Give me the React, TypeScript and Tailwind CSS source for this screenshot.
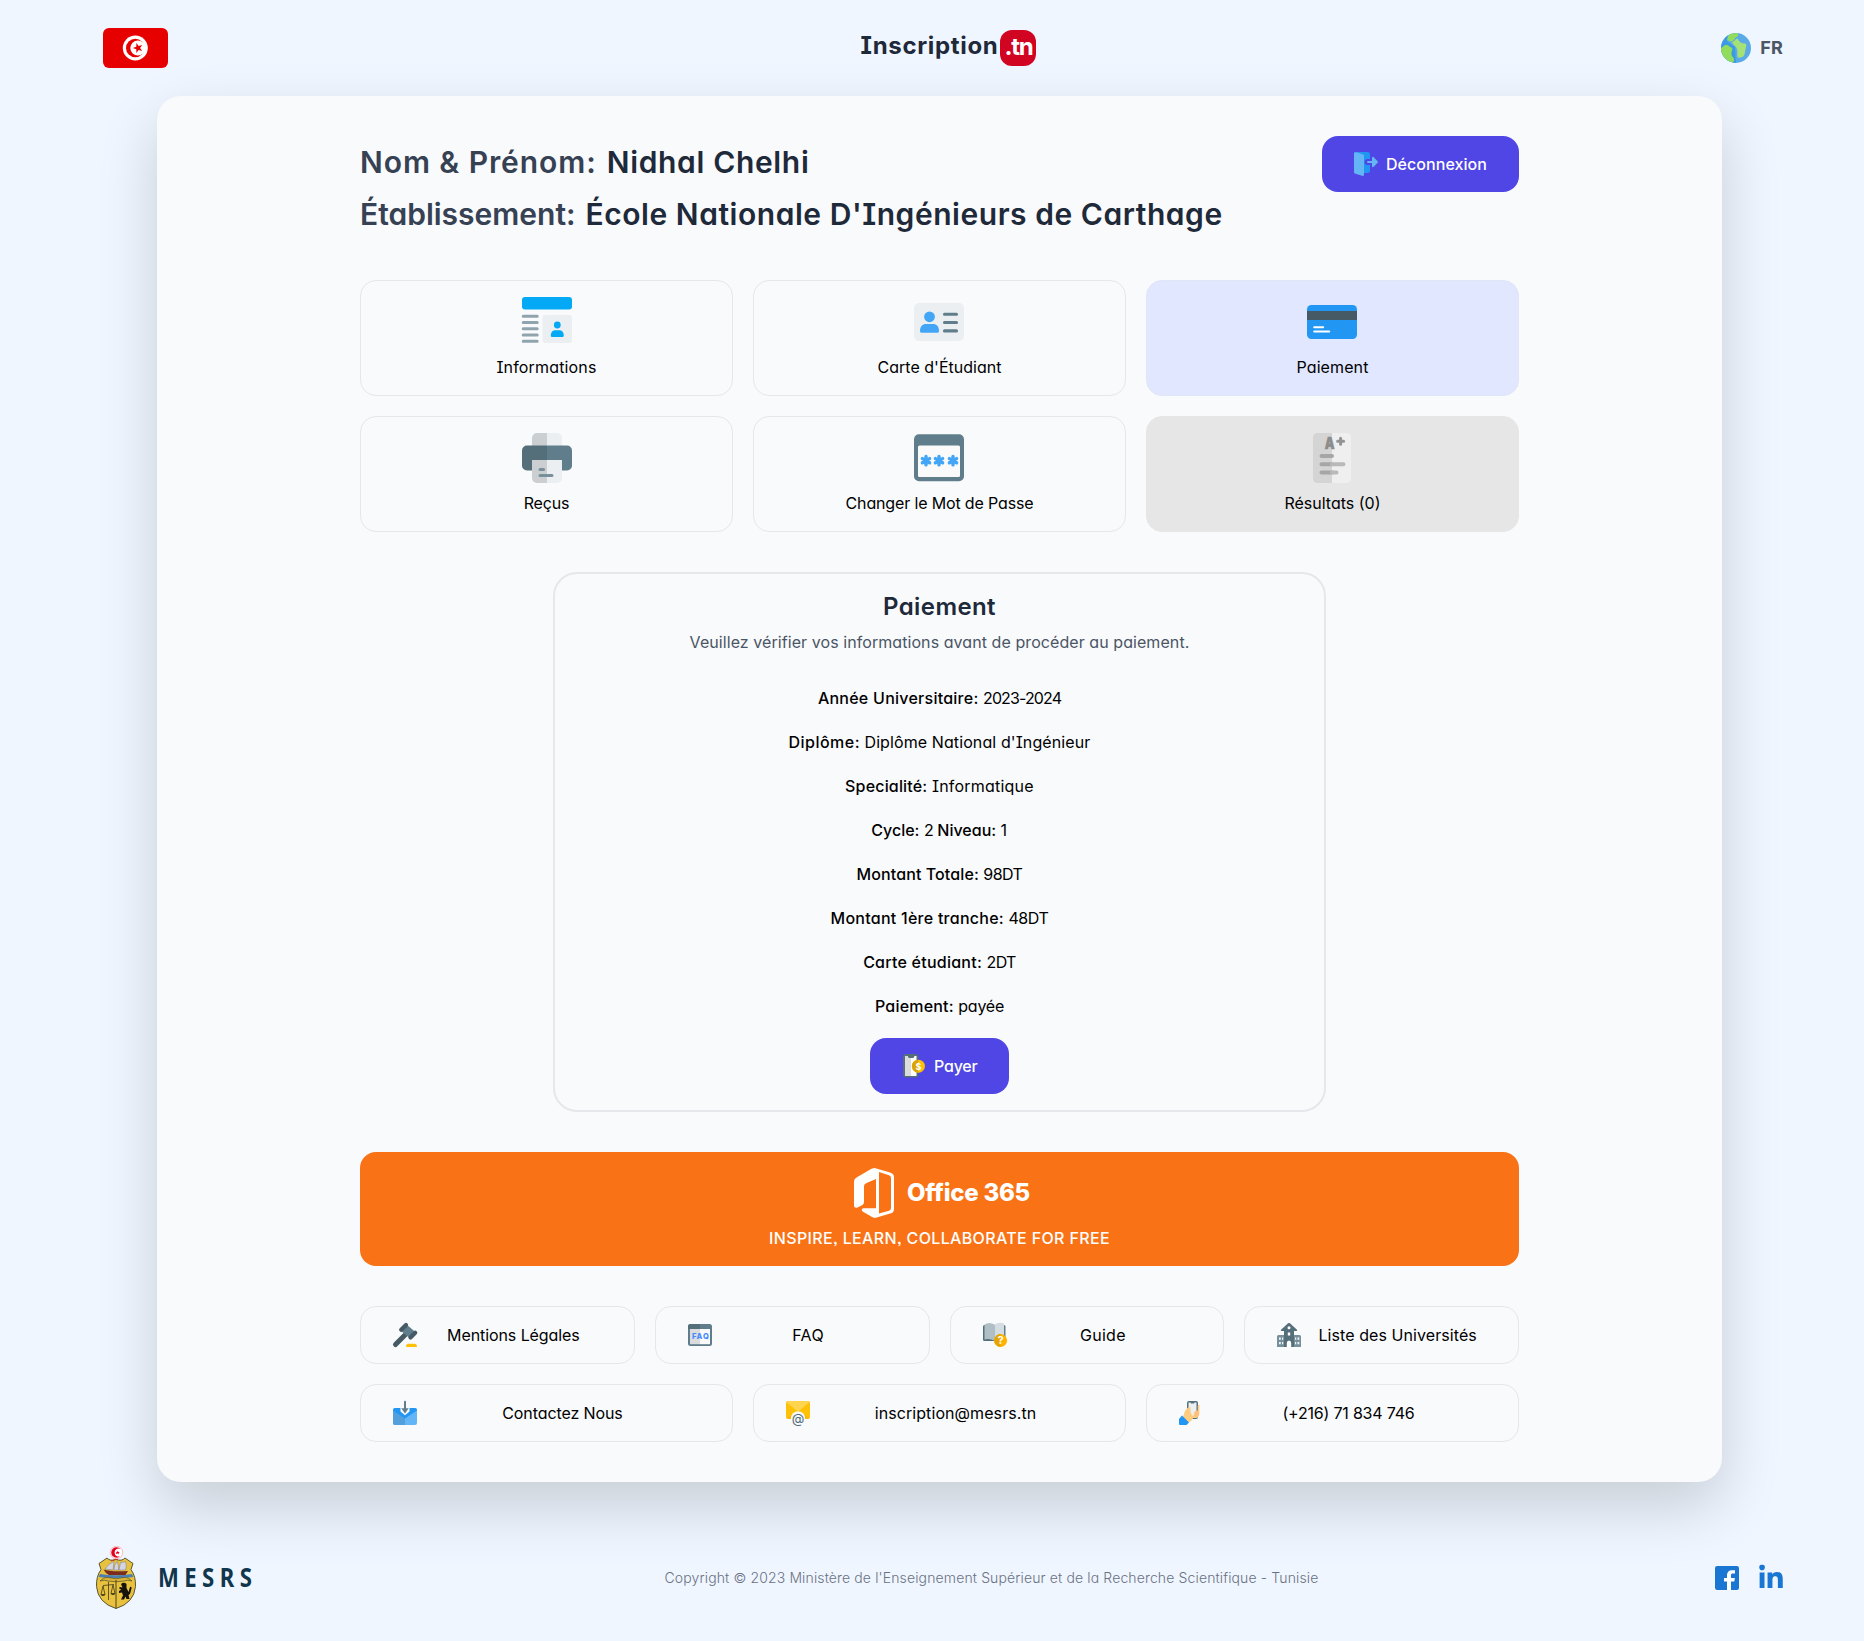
import type { ReactNode } from "react";
import { FaLinkedinIn } from "react-icons/fa";

const icon50 = "size-[50px] shrink-0 overflow-visible";
const icon50Nudged = "mr-px size-[50px] shrink-0 overflow-visible";
const icon24 = "size-6 shrink-0 overflow-visible";

function FlagIcon() {
  return (
    <svg viewBox="0 0 65 40" className="w-[65px] h-10">
      <rect width="65" height="40" rx="6" fill="#e70000" />
      <circle cx="32.3" cy="20" r="12.5" fill="#fff" />
      <circle cx="32.3" cy="20" r="9.3" fill="#e70000" />
      <circle cx="34.9" cy="20" r="7.6" fill="#fff" />
      <path d="M29.8 20l3.5-1.2.1-3.7 2.3 2.9 3.5-1-2.1 3.1 2.1 3-3.6-1-2.2 2.9-.1-3.7z" fill="#e70000" />
    </svg>
  );
}

function GlobeIcon() {
  return (
    <svg viewBox="0 0 30 30" className="size-[30px]">
      <defs>
        <clipPath id="globe"><circle cx="15" cy="15" r="15" /></clipPath>
      </defs>
      <g clipPath="url(#globe)">
        <rect width="30" height="30" fill="#5aaae7" />
        <path d="M0 0h7L6 8l8 6 1 16H0z" fill="#3d9ae2" />
        <path d="M8 1L17 0v3l-3 2c-1 2-2 3.500-4 3.500-1.500 0-2-1-4-1.500z" fill="#91dc5a" />
        <path d="M0 15c2-.5 2.500-3 5.500-3 2.500 0 2.500 2 5 2.500 2 1.500-.5 4 0 7 .5 2.500 3 3.500 2.500 5.500L12 30H0z" fill="#91dc5a" />
        <path d="M11 9c3-.5 3.500-3.500 5.500-3.500C18 9 21 11 24.500 10.500c1.500 1 .5 4 0 6-.5 3-1 7-3.500 7.500-2 .8-4 1-4.500 0-.6-2 .5-5-.5-8-1-3-4-4-5-7z" fill="#a4e276" />
      </g>
    </svg>
  );
}

function DoorIcon() {
  return (
    <svg viewBox="0 0 24 24" className={icon24}>
      <path d="M1.500 0H13.500a2.500 2.500 0 0 1 2.500 2.500V7h-2.500a3 3 0 0 0 0 6H16v5.500a2.500 2.500 0 0 1-2.500 2.500H9z" fill="#2196f3" />
      <path d="M0 1.500C0 .3 1 0 2 .3l6.500 2C9.500 2.600 10 3.200 10 4.200v18.200c0 1.200-.8 1.800-2 1.400l-6.500-2C.5 21.500 0 21 0 20z" fill="#64b5f6" />
      <path d="M14 9h4V5.800c0-1 1-1.300 1.700-.6l3.900 4c.5.500.5 1.100 0 1.600l-3.900 4c-.7.700-1.700.4-1.700-.6V11h-4a1 1 0 0 1 0-2z" fill="#64b5f6" />
    </svg>
  );
}

function InfoIcon() {
  return (
    <svg viewBox="0 0 50 50" className={icon50}>
      <rect width="50" height="12.500" rx="3" fill="#03a9f4" />
      <path d="M1.200 19.200h14M1.200 25.400h14M1.200 31.700h14M1.200 38h14M1.200 44.200h14" stroke="#90a4ae" strokeWidth="3" strokeLinecap="round" />
      <rect x="20.500" y="18" width="29.500" height="28" rx="2.500" fill="#eceff1" />
      <circle cx="35.300" cy="28" r="3.400" fill="#03a9f4" />
      <path d="M28.800 38.500c0-3.500 2-5.300 4.500-5.300h4c2.500 0 4.500 1.800 4.500 5.300 0 .9-.5 1.500-1.400 1.500H30.200c-.9 0-1.400-.6-1.400-1.500z" fill="#03a9f4" />
    </svg>
  );
}

function IdCardIcon() {
  return (
    <svg viewBox="0 0 50 50" className={icon50Nudged}>
      <rect y="6" width="50" height="38" rx="5" fill="#eceff1" />
      <circle cx="15.500" cy="19.800" r="5.400" fill="#42a5f5" />
      <path d="M6 34c0-4.500 2.500-7 6-7h7c3.500 0 6 2.500 6 7 0 1.200-.6 1.800-1.800 1.800H7.800C6.600 35.800 6 35.200 6 34z" fill="#42a5f5" />
      <path d="M30.500 17.200h12M30.500 25.500h12M30.500 33.900h12" stroke="#607d8b" strokeWidth="3.100" strokeLinecap="round" />
    </svg>
  );
}

function CreditCardIcon() {
  return (
    <svg viewBox="0 0 50 50" className={icon50Nudged}>
      <rect y="8" width="50" height="34" rx="4.500" fill="#2196f3" />
      <rect y="14" width="50" height="9" fill="#455a64" />
      <path d="M7.200 30.300h9M7.200 34.400h15" stroke="#fff" strokeWidth="2" strokeLinecap="round" />
    </svg>
  );
}

function PrinterIcon() {
  return (
    <svg viewBox="0 0 50 50" className={icon50}>
      <path d="M25 0h10a5 5 0 0 1 5 5v9H25z" fill="#eceff1" />
      <path d="M25 0H15a5 5 0 0 0-5 5v9h15z" fill="#cbcfd2" />
      <path d="M25 12.500h20a5 5 0 0 1 5 5v15a5 5 0 0 1-5 5H25z" fill="#607d8b" />
      <path d="M25 12.500H5a5 5 0 0 0-5 5v15a5 5 0 0 0 5 5h20z" fill="#546e7a" />
      <path d="M25 27h15v18a5 5 0 0 1-5 5H25z" fill="#eceff1" />
      <path d="M25 27H10v18a5 5 0 0 0 5 5h10z" fill="#cbcfd2" />
      <path d="M18 36.400h3.600M18 42.500h12" stroke="#78909c" strokeWidth="3" strokeLinecap="round" />
    </svg>
  );
}

function PasswordIcon() {
  return (
    <svg viewBox="0 0 50 50" className={icon50Nudged}>
      <rect y="1.200" width="50" height="47" rx="5" fill="#607d8b" />
      <rect x="4" y="12.500" width="42" height="31.500" rx="1.500" fill="#fafafa" />
      <path
        d="M12 23.500v8.400M8.400 25.600l7.200 4.200M15.600 25.600l-7.200 4.200M25 23.500v8.400M21.400 25.600l7.200 4.200M28.600 25.600l-7.200 4.200M39 23.500v8.400M35.400 25.600l7.200 4.200M42.600 25.600l-7.200 4.200"
        stroke="#42a5f5"
        strokeWidth="3.400"
        strokeLinecap="round"
      />
    </svg>
  );
}

function ResultsIcon() {
  return (
    <svg viewBox="0 0 50 50" className={icon50Nudged}>
      <path d="M25 0h14.500a4.500 4.500 0 0 1 4.500 4.500v41a4.500 4.500 0 0 1-4.500 4.500H25z" fill="#efefef" />
      <path d="M25 0H10.500A4.500 4.500 0 0 0 6 4.500v41a4.500 4.500 0 0 0 4.500 4.500H25z" fill="#d4d4d4" />
      <text x="17.800" y="16.300" fontFamily="Inter" fontWeight="900" fontSize="16.500" textLength="9.800" lengthAdjust="spacingAndGlyphs" fill="#8c8c8c" stroke="#8c8c8c" strokeWidth=".7" strokeLinejoin="round">A</text>
      <path d="M33.600 5.300v6M30.600 8.300h6" stroke="#939393" strokeWidth="3" strokeLinecap="round" />
      <path d="M14.500 22.900H25M14.500 31.200H25M14.500 39.500H25" stroke="#a6a6a6" strokeWidth="4" strokeLinecap="round" />
      <path d="M25 31.200h11.500M25 39.500h4.500" stroke="#b9b9b9" strokeWidth="4" strokeLinecap="round" />
    </svg>
  );
}

function PhonePayIcon() {
  return (
    <svg viewBox="0 0 24 24" className={icon24}>
      <rect x="1" width="15.500" height="23.500" rx="3" fill="#546e7a" />
      <path d="M3 2h2.500l1 2h5l1-2H14.500v20H3z" fill="#fff" />
      <path d="M3 2h2.500l1 2H9v18H3z" fill="#dcdcdc" />
      <circle cx="16.400" cy="12.200" r="6.500" fill="#ffc107" />
      <path d="M16.400 5.700a6.500 6.500 0 0 0 0 13z" fill="#d9a406" />
      <text x="16.400" y="15.600" textAnchor="middle" fontFamily="Inter" fontWeight="700" fontSize="9" fill="#fff">$</text>
    </svg>
  );
}

function OfficeIcon() {
  return (
    <svg viewBox="0 0 50 50" className={icon50}>
      <path
        transform="translate(5 0)"
        fill="#fff"
        fillRule="evenodd"
        d="M20.500 0L36 4.500Q40 5.700 40 9V41Q40 44.300 37 45.300L21 50L18.500 49.300L9 43.800Q7 42.500 8 41Q8.500 40.200 10 40.200H22V11L12.500 15Q10 16 10 18V34Q10 36 8.500 37L3 39.700Q0 40 0 38V13.500Q0 11 2.500 9.500L17.500.8ZM25 4V45.500L35 42.700Q37 42 37 40V10Q37 8 35 7.300Z"
      />
    </svg>
  );
}

function GavelIcon() {
  return (
    <svg viewBox="0 0 24 24" className={icon24}>
      <path d="M2.500 21.500L12 12" stroke="#455a64" strokeWidth="5" strokeLinecap="round" />
      <path d="M7 7l6-6 10.500 9L17 15.500z" fill="#607d8b" />
      <path d="M8.200 6.800L13 2M17.500 14.500l4.700-4.700" stroke="#455a64" strokeWidth="4.200" strokeLinecap="round" />
      <path d="M13 24c0-2 1-3.200 2.500-3.200h6c1.500 0 2.500 1.200 2.500 3.200z" fill="#ffc107" />
    </svg>
  );
}

function FaqIcon() {
  return (
    <svg viewBox="0 0 24 24" className={icon24}>
      <rect y="1" width="24" height="22" rx="2.500" fill="#607d8b" />
      <path d="M2.500 1H12v5H0V3.500A2.500 2.500 0 0 1 2.500 1z" fill="#546e7a" />
      <rect x="2" y="6" width="10" height="15.200" fill="#dadcde" />
      <rect x="12" y="6" width="10" height="15.200" fill="#fafafa" />
      <text x="4" y="16.400" textLength="16.800" fontFamily="Inter" fontWeight="800" fontSize="7.500" fill="#448aff">FAQ</text>
    </svg>
  );
}

function GuideIcon() {
  return (
    <svg viewBox="0 0 24 24" className={icon24}>
      <path d="M0 3.500Q0 2 1.500 2H11v16H1.500Q0 18 0 16.500z" fill="#546e7a" />
      <path d="M11 2h10q1.500 0 1.500 1.500v13q0 1.500-1.500 1.500H11z" fill="#607d8b" />
      <path d="M1.500 1.500Q6-1.500 11.500 1.500v16Q6 15 1.500 16.500z" fill="#b0bec5" />
      <path d="M11.500 1.500Q16-1.500 21 .5v15.500q-5-1-9.500 1.500z" fill="#d4dde1" />
      <circle cx="17.600" cy="17.500" r="6.500" fill="#ffb300" />
      <path d="M17.600 11a6.500 6.500 0 0 0 0 13z" fill="#e6a400" />
      <text x="17.600" y="21.400" textAnchor="middle" fontFamily="Inter" fontWeight="700" fontSize="11" fill="#fff">?</text>
    </svg>
  );
}

function UniversityIcon() {
  return (
    <svg viewBox="0 0 24 24" className={icon24}>
      <path d="M0 13.500Q0 12 1.500 12H7v12H0zM17 12h5.500Q24 12 24 13.500V24h-7z" fill="#78909c" />
      <path d="M12 0q1 0 2 1.200l6 5.500q.8 1.300-.8 1.300H17v16H7V8H4.800Q3.200 8 4 6.700l6-5.500Q11 0 12 0z" fill="#546e7a" />
      <circle cx="12" cy="4.800" r="1.500" fill="#fff" />
      <path d="M10.800 9.500h2.400v3h-2.400zM9.800 24v-4q0-2.500 2.200-2.500t2.200 2.500v4z" fill="#fff" />
      <path d="M2 14.500h1.800v2.200H2zM5 14.500h1.200v2.200H5zM2 19h1.800v2.200H2zM5 19h1.200v2.200H5zM18 14.500h1.200v2.200H18zM20.500 14.500h1.800v2.200h-1.800zM18 19h1.200v2.200H18zM20.500 19h1.800v2.200h-1.800z" fill="#eef2f5" />
    </svg>
  );
}

function InboxIcon() {
  return (
    <svg viewBox="0 0 24 24" className={icon24}>
      <path d="M0 9q0-2 2-2h20q2 0 2 2v13q0 2-2 2H2q-2 0-2-2z" fill="#64b5f6" />
      <path d="M0 9h12v15H2q-2 0-2-2z" fill="#539fdb" />
      <path d="M0 9.500q0-2.500 2-2.500h20q2 0 2 2.500l-12 8z" fill="#2196f3" />
      <path d="M7.500 7h9v3.500l-4.500 3.800-4.500-3.800z" fill="#f9fafb" />
      <path d="M12 .8v9" stroke="#607d8b" strokeWidth="2" strokeLinecap="round" />
      <path d="M8.300 7.200h7.400L12 12.400z" fill="#607d8b" />
    </svg>
  );
}

function MailIcon() {
  return (
    <svg viewBox="0 0 24 24" className={icon24}>
      <rect width="24" height="18" rx="2" fill="#ffc107" />
      <path d="M1 17.500L12 9l11 8.500z" fill="#ffb300" />
      <path d="M.5 1.200Q1 0 2 0h20q1 0 1.500 1.200L12 10.500z" fill="#ffd54f" />
      <circle cx="12" cy="17.300" r="7" fill="#f9fafb" />
      <text x="12" y="21.600" textAnchor="middle" fontFamily="Inter" fontWeight="400" fontSize="13" fill="#546e7a">@</text>
    </svg>
  );
}

function PhoneHandIcon() {
  return (
    <svg viewBox="0 0 24 24" className={icon24}>
      <rect x="8" width="11" height="18" rx="2" fill="#546e7a" />
      <path d="M9.500 1.500h2l.5 1h3l.5-1h2v15h-8z" fill="#eceff1" />
      <path d="M8 7.500Q5 10 5 13l-1 3 5 5.500q4-1.500 5-4.500h3.500q2.500-1 2.800-4l.2-9q-1.500-.8-1.800 1V10q-1.500 0-3 2.500l-2 2.500Q12 13 11.500 10V6.500Q9.500 5.500 8 7.500z" fill="#ffcc80" />
      <path d="M15 12q1-3 3.500-2.500 2 1 1.500 4-1 3-4 2.500z" fill="#ffbf78" />
      <path d="M3 14.500l7 7-2.500 2.500H1q-1 0-1-1v-5z" fill="#2196f3" />
    </svg>
  );
}

function CoatOfArms() {
  return (
    <svg viewBox="0 0 40 63" className="h-[63px] w-10 shrink-0">
      <circle cx="20.500" cy="6.500" r="6.300" fill="#fff" stroke="#f5a3ad" strokeWidth=".7" />
      <path d="M24.500 3A5.300 5.300 0 1 0 24.500 10a4 4 0 1 1 0-7z" fill="#e4001f" />
      <path d="M19.800 6.500l1.400-.4.500-1.500.7 1.400 1.500.1-1.300.9.300 1.500-1.200-.9-1.300.5z" fill="#e4001f" />
      <path d="M3 17.500L11 12q3 3.500 9 1.500 6 2 9-1.500l8 5.500-2 6q5 7 4.500 17Q38 57 20 62.500 2 57 .5 40.500 0 30.500 5 23.500z" fill="#e8c23e" stroke="#4a4526" strokeWidth=".9" />
      <path d="M4 28q16 2.500 32 0l1.500 3q-17.500 2-35 0z" fill="#4a7fb5" />
      <path d="M15 15q5-2.500 7-1.500" stroke="#c0392b" strokeWidth="1" fill="none" />
      <path d="M9 23q4-6 9-7.500l-1 8.500zM18 24q0-5 3-8.500 2 3 1.500 8.500zM23 24l1.500-7.500q3 0 5-1 1.500 4.500 0 8.500z" fill="#d5d5e2" stroke="#77778c" strokeWidth=".5" />
      <path d="M7.500 23.500q8 2.500 24.500 1.500l-2.500 4H13q-3.500-1.500-5.500-5.500z" fill="#7b2d1d" />
      <path d="M4 35q4-4.500 8-3.500 8 2.500 16 0 4-1 8 3.500-5-1.500-8 0-8 1.500-16 0-3-1.500-8 0z" fill="#dcb53a" stroke="#55501f" strokeWidth=".7" />
      <path d="M20 34v28.500" stroke="#4a4526" strokeWidth="1" />
      <path d="M12.500 36v18M7 39.500l11-1M7 40l-2 8.500h4zM17 39l-2 8.500h4z" stroke="#3f3a1c" strokeWidth=".8" fill="none" />
      <path d="M4.500 48.500h5q-2.500 3-5 0zM14.500 47.500h5q-2.500 3-5 0z" fill="#3f3a1c" />
      <path d="M25 38q3-2.500 5.500 0v4l2 4 1.500-5q2-1 1.500 1.500L34 48l-1.500 1 1 4h-3l-1-2.500-1.500 3h-3l2-4-1-3-3 .5v-2l2.500-1.500-2-.5v-2l3 .5z" fill="#15130c" />
    </svg>
  );
}

function FacebookIcon() {
  return (
    <svg viewBox="0 0 24 24" className={icon24}>
      <rect width="24" height="24" rx="2.200" fill="#1976d2" />
      <path d="M12 24v-8.500H9V12h3V9.700C12 6 14 4.200 17 4.200h3v3.400h-2c-1.500 0-2 .6-2 1.900V12h3.900l-.6 3.500H16V24z" fill="#fff" />
    </svg>
  );
}

type Item = { label: string; tracking: string; icon: ReactNode; tone?: string };

const plainTone = "border-gray-200";

const tiles: Item[] = [
  { label: "Informations", tracking: "tracking-[0.16px]", icon: <InfoIcon /> },
  { label: "Carte d'Étudiant", tracking: "tracking-[0.02px]", icon: <IdCardIcon /> },
  { label: "Paiement", tracking: "tracking-[0.1px]", icon: <CreditCardIcon />, tone: "border-[#e0e5f8] bg-[#e0e7ff]" },
  { label: "Reçus", tracking: "tracking-[-0.15px]", icon: <PrinterIcon /> },
  { label: "Changer le Mot de Passe", tracking: "tracking-[-0.15px]", icon: <PasswordIcon /> },
  { label: "Résultats (0)", tracking: "tracking-[0px]", icon: <ResultsIcon />, tone: "border-[#e6e6e6] bg-[#e6e6e6]" },
];

const helpLinks: Item[] = [
  { label: "Mentions Légales", tracking: "tracking-[-0.08px]", icon: <GavelIcon /> },
  { label: "FAQ", tracking: "tracking-[0.3px]", icon: <FaqIcon /> },
  { label: "Guide", tracking: "tracking-[0.3px]", icon: <GuideIcon /> },
  { label: "Liste des Universités", tracking: "tracking-[0.08px]", icon: <UniversityIcon /> },
];

const contactLinks: Item[] = [
  { label: "Contactez Nous", tracking: "tracking-[-0.1px]", icon: <InboxIcon /> },
  { label: "inscription@mesrs.tn", tracking: "tracking-[0.08px]", icon: <MailIcon /> },
  { label: "(+216) 71 834 746", tracking: "tracking-[-0.2px]", icon: <PhoneHandIcon /> },
];

type Part = { text: string; cls: string };

const details: Part[][] = [
  [{ text: "Année Universitaire:", cls: "font-medium tracking-[0.25px]" }, { text: "2023-2024", cls: "tracking-[-0.88px]" }],
  [{ text: "Diplôme:", cls: "font-medium tracking-[0.47px]" }, { text: "Diplôme National d'Ingénieur", cls: "tracking-[0.1px]" }],
  [{ text: "Specialité:", cls: "font-medium tracking-[0.17px]" }, { text: "Informatique", cls: "tracking-[0.22px]" }],
  [
    { text: "Cycle:", cls: "font-medium tracking-[0px]" },
    { text: "2", cls: "tracking-[-0.9px]" },
    { text: "Niveau:", cls: "font-medium tracking-[0px]" },
    { text: "1", cls: "tracking-[0.6px]" },
  ],
  [{ text: "Montant Totale:", cls: "font-medium tracking-[0.1px]" }, { text: "98DT", cls: "tracking-[-0.55px]" }],
  [{ text: "Montant 1ère tranche:", cls: "font-medium tracking-[0.26px]" }, { text: "48DT", cls: "tracking-[-0.4px]" }],
  [{ text: "Carte étudiant:", cls: "font-medium tracking-[0.24px]" }, { text: "2DT", cls: "tracking-[-0.6px]" }],
  [{ text: "Paiement:", cls: "font-medium tracking-[0.2px]" }, { text: "payée", cls: "tracking-[-0.25px]" }],
];

function Tile({ label, tracking, icon, tone = plainTone }: Item) {
  return (
    <button className={`flex flex-col items-center gap-2 rounded-2xl border p-4 ${tone}`}>
      {icon}
      <span className={`leading-6 ${tracking}`}>{label}</span>
    </button>
  );
}

function LinkRow({ label, tracking, icon }: Item) {
  return (
    <a className="flex items-center gap-2 rounded-2xl border border-gray-200 px-8 py-4">
      {icon}
      <span className={`flex-1 whitespace-nowrap text-center leading-6 ${tracking}`}>{label}</span>
    </a>
  );
}

export default function App() {
  return (
    <div className="flex h-[1641px] w-[1864px] flex-col overflow-hidden bg-[#eff6ff] font-['Inter',sans-serif] text-base font-normal text-black [font-feature-settings:'cv08','cv11','ss03']">
      <header className="grid h-24 shrink-0 grid-cols-[1fr_auto_1fr] items-center pl-[103px] pr-[81px]">
        <FlagIcon />
        <div className="ml-[11px] flex items-center gap-[2px] text-2xl font-bold text-gray-800">
          <span className="pb-[4px] tracking-[0.68px]">Inscription</span>
          <span className="grid size-9 place-items-center rounded-xl bg-[#d10422] pb-[2px] tracking-[-1.2px] text-white">.tn</span>
        </div>
        <div className="flex items-center justify-end gap-[9px]">
          <GlobeIcon />
          <span className="text-lg font-bold tracking-[0.2px] text-gray-600">FR</span>
        </div>
      </header>

      <main className="ml-[157px] h-[1386px] w-[1565px] shrink-0 rounded-3xl bg-[#f9fafc] px-[203px] py-10 shadow-[0_25px_60px_rgba(0,0,0,0.165)]">
        <div className="flex items-start justify-between">
          <div className="text-3xl font-semibold leading-[52px] text-gray-700">
            <div className="flex gap-[10px]">
              <span className="tracking-[0.93px]">Nom &amp; Prénom:</span>
              <span className="tracking-[0.66px] text-gray-800">Nidhal Chelhi</span>
            </div>
            <div className="flex gap-[10px]">
              <span className="tracking-[0px]">Établissement:</span>
              <span className="tracking-[0.54px] text-gray-800">École Nationale D'Ingénieurs de Carthage</span>
            </div>
          </div>
          <button className="flex h-14 w-[197px] items-center gap-2 rounded-2xl bg-[#4f46e5] px-8 font-medium text-white">
            <DoorIcon />
            <span className="tracking-[0.05px]">Déconnexion</span>
          </button>
        </div>

        <nav className="mt-10 grid grid-cols-3 gap-5">
          {tiles.map((t) => (
            <Tile key={t.label} {...t} />
          ))}
        </nav>

        <section className="mx-auto mt-10 flex w-2/3 flex-col items-center rounded-3xl border-2 border-gray-200 p-4">
          <h2 className="pt-px text-2xl font-semibold tracking-[0.4px] text-gray-800">Paiement</h2>
          <p className="mb-8 mt-[7px] leading-6 tracking-[0.07px] text-gray-600">
            Veuillez vérifier vos informations avant de procéder au paiement.
          </p>
          <div className="mb-5 flex flex-col items-center gap-5">
            {details.map((row) => (
              <div key={row[0].text} className="flex gap-[4.5px] leading-6">
                {row.map((p) => (
                  <span key={p.text} className={p.cls}>{p.text}</span>
                ))}
              </div>
            ))}
          </div>
          <button className="flex h-14 w-[139px] items-center gap-2 rounded-2xl bg-[#4f46e5] px-8 font-medium text-white">
            <PhonePayIcon />
            <span className="tracking-[-0.2px]">Payer</span>
          </button>
        </section>

        <a className="mt-10 flex flex-col items-center gap-2 rounded-2xl bg-[#f97316] p-4 text-white">
          <div className="flex items-center gap-2">
            <OfficeIcon />
            <span className="text-2xl font-extrabold tracking-[-0.25px]">Office 365</span>
          </div>
          <span className="font-medium leading-6 tracking-[0.35px] [font-feature-settings:'cv11','ss03']">INSPIRE, LEARN, COLLABORATE FOR FREE</span>
        </a>

        <div className="mt-10 grid grid-cols-4 gap-5">
          {helpLinks.map((l) => (
            <LinkRow key={l.label} {...l} />
          ))}
        </div>
        <div className="mt-5 grid grid-cols-3 gap-5">
          {contactLinks.map((l) => (
            <LinkRow key={l.label} {...l} />
          ))}
        </div>
      </main>

      <footer className="mt-[64px] flex h-[63px] shrink-0 items-center justify-between pl-24 pr-[81px]">
        <div className="flex w-[160px] items-center gap-[22px]">
          <CoatOfArms />
          <span className="origin-left scale-x-[0.82] font-['Noto_Sans'] text-[27px] font-bold tracking-[6.6px] text-[#11364d]">MESRS</span>
        </div>
        <p className="ml-[12px] text-sm font-light tracking-[0.13px] text-gray-500">
          Copyright © 2023 Ministère de l'Enseignement Supérieur et de la Recherche Scientifique - Tunisie
        </p>
        <div className="flex gap-5">
          <FacebookIcon />
          <FaLinkedinIn className="size-6 scale-[1.12] text-[#1976d2]" />
        </div>
      </footer>
    </div>
  );
}
